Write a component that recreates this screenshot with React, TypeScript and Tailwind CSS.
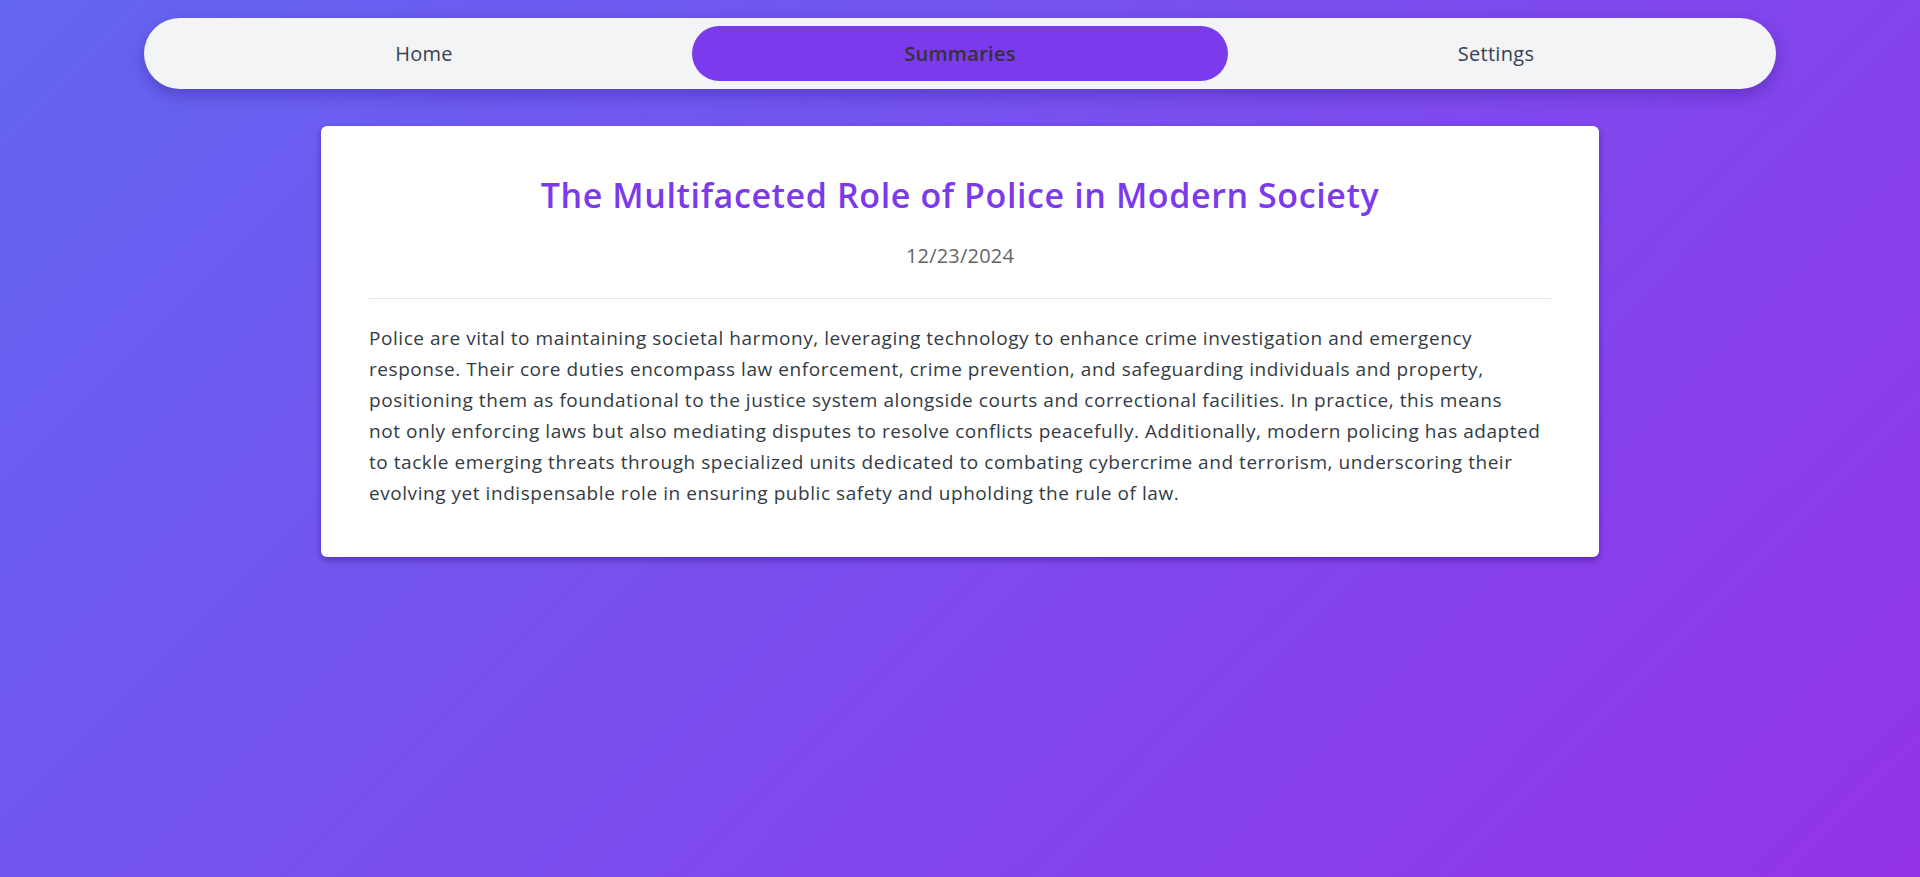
import React from "react";

const lines = [
  "Police are vital to maintaining societal harmony, leveraging technology to enhance crime investigation and emergency",
  "response. Their core duties encompass law enforcement, crime prevention, and safeguarding individuals and property,",
  "positioning them as foundational to the justice system alongside courts and correctional facilities. In practice, this means",
  "not only enforcing laws but also mediating disputes to resolve conflicts peacefully. Additionally, modern policing has adapted",
  "to tackle emerging threats through specialized units dedicated to combating cybercrime and terrorism, underscoring their",
  "evolving yet indispensable role in ensuring public safety and upholding the rule of law.",
];

export default function App() {
  const tabs = ["Home", "Summaries", "Settings"];
  const active = "Summaries";
  return (
    <div
      className="min-h-screen w-full bg-[linear-gradient(135deg,#6366f1,#9333ea)] pt-[18px] pb-10"
      style={{ fontFamily: "'Open Sans', 'Noto Sans', sans-serif" }}
    >
      <nav className="mx-auto flex w-[85%] items-center rounded-[36px] bg-[#f3f4f6] px-[12px] py-[8px] shadow-[0_6px_16px_rgba(40,20,120,0.35)]">
        {tabs.map((t) => (
          <button
            key={t}
            className={
              t === active
                ? "flex h-[55px] flex-1 items-center justify-center rounded-full bg-[#7c3aed] text-[20px] tracking-[0.3px] font-semibold text-[#333333]"
                : "flex h-[55px] flex-1 items-center justify-center rounded-full text-[20px] tracking-[0.3px] text-[#374151]"
            }
          >
            {t}
          </button>
        ))}
      </nav>

      <main className="mx-auto mt-[37px] w-[1278px] rounded-[6px] bg-white px-12 pt-[47px] pb-[48px] shadow-[0_3px_6px_rgba(40,10,110,0.45)]">
        <h1 className="text-center text-[34px] leading-[44px] tracking-[0.6px] font-semibold text-[#7c3aed]">
          The Multifaceted Role of Police in Modern Society
        </h1>
        <p className="mt-[25px] text-center text-[20px] leading-[28px] tracking-[0.2px] text-[#666666]">12/23/2024</p>
        <hr className="mt-[28px] border-t border-[#e5e5e5]" />
        <p className="mt-[24px] whitespace-nowrap text-[19px] leading-[31px] tracking-[0.55px] text-[#333b44]">
          {lines.map((l, i) => (
            <React.Fragment key={i}>
              {l}
              {i < lines.length - 1 && <br />}
            </React.Fragment>
          ))}
        </p>
      </main>
    </div>
  );
}
